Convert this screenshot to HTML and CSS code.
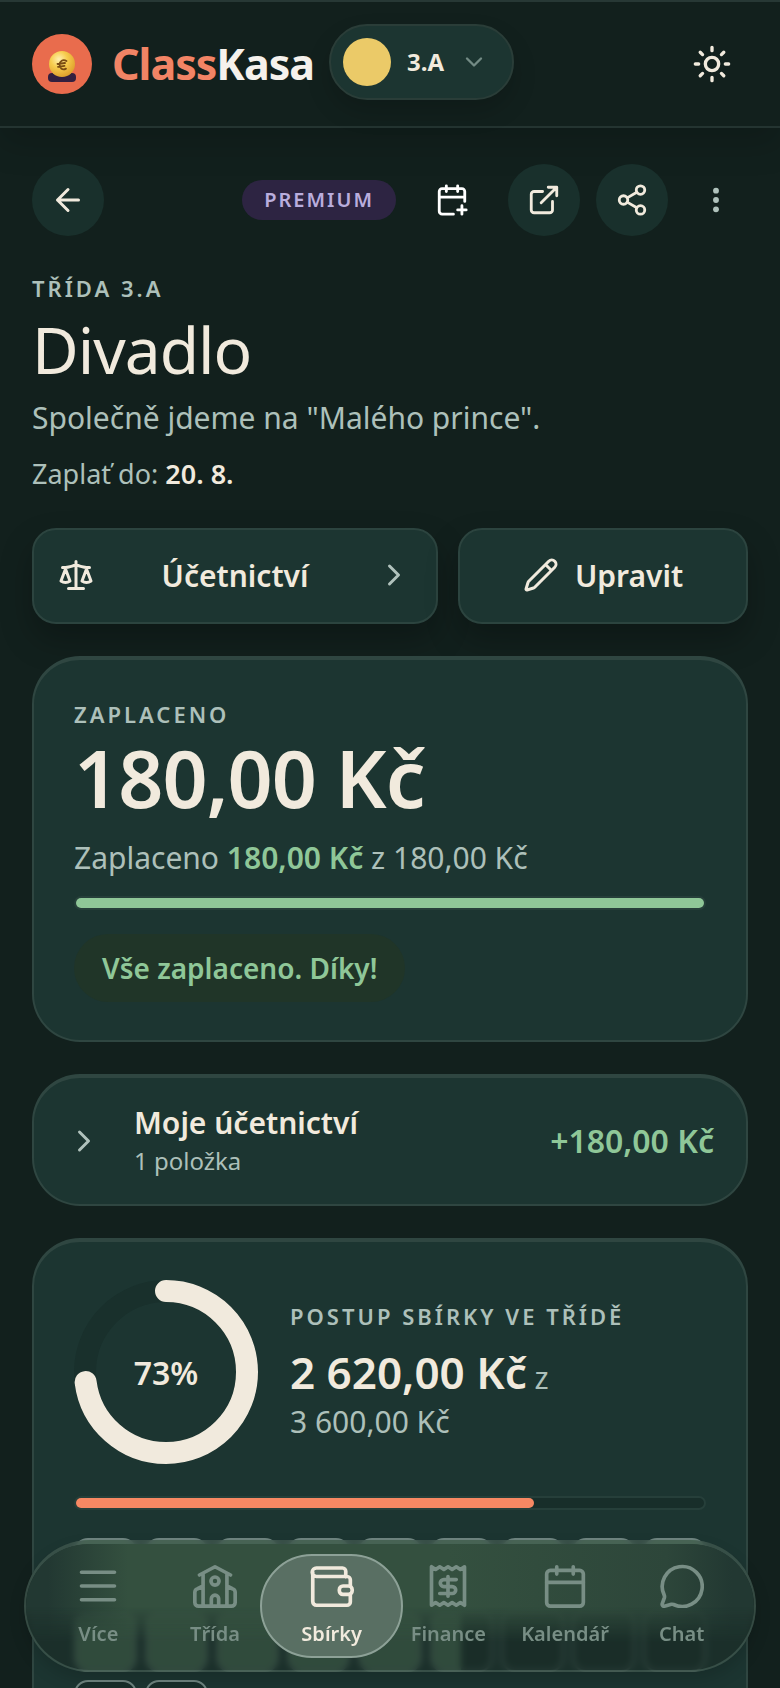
FILE: index.html
```html
<!DOCTYPE html>
<html lang="cs">
<head>
    <meta charset="UTF-8">
    <meta name="viewport" content="width=device-width, initial-scale=1.0">
    <title>Divadlo | ClassKasa</title>
    <link rel="stylesheet" href="styles.css">
</head>
<body>
    <header class="topbar">
        <a href="#" class="brand">
            <svg class="brand-logo" viewBox="0 0 60 60" aria-hidden="true">
                <defs>
                    <radialGradient id="coin" cx="38%" cy="32%" r="70%">
                        <stop offset="0" stop-color="#fff0b0"/>
                        <stop offset="0.45" stop-color="#f7cd4e"/>
                        <stop offset="1" stop-color="#dfa02c"/>
                    </radialGradient>
                </defs>
                <circle cx="30" cy="30" r="30" fill="#e96c4d"/>
                <rect x="16" y="39" width="28" height="9" rx="4" fill="#33203f"/>
                <circle cx="30" cy="30" r="13" fill="url(#coin)"/>
                <path d="M34.500 27c-3.500-2-7 0-7 3.600s3 6 6.500 4M25.500 30l7.500-1M26 32.800l6.500-1" fill="none" stroke="#7a4c12" stroke-width="1.800"/>
            </svg>
            <span class="brand-name"><span class="brand-accent">Class</span>Kasa</span>
        </a>
        <button type="button" class="class-switch">
            <span class="class-dot"></span>
            <span class="class-label">3.A</span>
            <svg class="class-chevron" viewBox="0 0 24 24" aria-hidden="true"><path d="m6 9 6 6 6-6"/></svg>
        </button>
        <button type="button" class="theme-btn" aria-label="Motiv">
            <svg viewBox="0 0 24 24" aria-hidden="true"><circle cx="12" cy="12" r="4"/><path d="M12 2v2M12 20v2M4.930 4.930l1.410 1.410M17.660 17.660l1.410 1.410M2 12h2M20 12h2M6.340 17.660l-1.410 1.410M19.070 4.930l-1.410 1.410"/></svg>
        </button>
    </header>

    <main class="page">
        <div class="actions">
            <a href="#" class="round-btn back-btn" aria-label="Zpět">
                <svg viewBox="0 0 24 24" aria-hidden="true"><path d="m12 19-7-7 7-7M19 12H5"/></svg>
            </a>
            <span class="badge">PREMIUM</span>
            <button type="button" class="plain-btn" aria-label="Přidat do kalendáře">
                <svg viewBox="0 0 24 24" aria-hidden="true"><path d="M8 2v4M16 2v4M21 13V6a2 2 0 0 0-2-2H5a2 2 0 0 0-2 2v14a2 2 0 0 0 2 2h8M3 10h18M16 19h6M19 16v6"/></svg>
            </button>
            <button type="button" class="round-btn" aria-label="Otevřít">
                <svg viewBox="0 0 24 24" aria-hidden="true"><path d="M15 3h6v6M10 14 21 3M18 13v6a2 2 0 0 1-2 2H5a2 2 0 0 1-2-2V8a2 2 0 0 1 2-2h6"/></svg>
            </button>
            <button type="button" class="round-btn" aria-label="Sdílet">
                <svg viewBox="0 0 24 24" aria-hidden="true"><circle cx="18" cy="5" r="3"/><circle cx="6" cy="12" r="3"/><circle cx="18" cy="19" r="3"/><path d="m8.590 13.510 6.830 3.980M15.410 6.510l-6.820 3.980"/></svg>
            </button>
            <button type="button" class="more-btn" aria-label="Další možnosti">
                <svg viewBox="0 0 24 24" aria-hidden="true"><circle cx="12" cy="5" r="2.200"/><circle cx="12" cy="12" r="2.200"/><circle cx="12" cy="19" r="2.200"/></svg>
            </button>
        </div>

        <section class="intro">
            <p class="eyebrow">TŘÍDA 3.A</p>
            <h1>Divadlo</h1>
            <p class="lead">Společně jdeme na "Malého prince".</p>
            <p class="due">Zaplať do: <strong>20. 8.</strong></p>
        </section>

        <div class="cta-row">
            <button type="button" class="cta cta-wide">
                <svg class="cta-icon" viewBox="0 0 24 24" aria-hidden="true"><path d="m16 16 3-8 3 8c-.87.65-1.920 1-3 1s-2.130-.35-3-1ZM2 16l3-8 3 8c-.87.65-1.920 1-3 1s-2.130-.35-3-1ZM7 21h10M12 3v18M3 7h2c2 0 5-1 7-2 2 1 5 2 7 2h2"/></svg>
                <span>Účetnictví</span>
                <svg class="cta-arrow" viewBox="0 0 24 24" aria-hidden="true"><path d="m9 18 6-6-6-6"/></svg>
            </button>
            <button type="button" class="cta">
                <svg class="cta-icon" viewBox="0 0 24 24" aria-hidden="true"><path d="M21.170 6.810a1 1 0 0 0-3.990-3.990L3.840 16.170a2 2 0 0 0-.5.830l-1.320 4.350a.5.5 0 0 0 .62.620l4.350-1.320a2 2 0 0 0 .83-.5zM15 5l4 4"/></svg>
                <span>Upravit</span>
            </button>
        </div>

        <section class="card paid">
            <p class="eyebrow">ZAPLACENO</p>
            <p class="amount">180,00 Kč</p>
            <p class="paid-text">Zaplaceno <strong>180,00 Kč</strong> z 180,00 Kč</p>
            <div class="bar"><div class="bar-fill bar-green" style="width: 100%"></div></div>
            <p class="notice">Vše zaplaceno. Díky!</p>
        </section>

        <button type="button" class="card ledger">
            <svg class="cta-arrow" viewBox="0 0 24 24" aria-hidden="true"><path d="m9 18 6-6-6-6"/></svg>
            <span class="ledger-text">
                <span class="ledger-title">Moje účetnictví</span>
                <span class="ledger-sub">1 položka</span>
            </span>
            <span class="ledger-sum">+180,00 Kč</span>
        </button>

        <section class="card progress">
            <div class="progress-head">
                <div class="ring">
                    <svg viewBox="0 0 184 184" aria-hidden="true">
                        <circle class="ring-track" cx="92" cy="92" r="81"/>
                        <circle class="ring-value" cx="92" cy="92" r="81" pathLength="100" stroke-dasharray="73 100"/>
                    </svg>
                    <span class="ring-label">73%</span>
                </div>
                <div class="progress-text">
                    <p class="eyebrow">POSTUP SBÍRKY VE TŘÍDĚ</p>
                    <p class="progress-sum"><strong>2 620,00 Kč</strong><small> z</small></p>
                    <p class="progress-goal">3 600,00 Kč</p>
                </div>
            </div>
            <div class="bar"><div class="bar-fill bar-coral" style="width: 73%"></div></div>
            <div class="tiles">
                <i class="tile full"></i><i class="tile full"></i><i class="tile full"></i><i class="tile full"></i><i class="tile full"></i><i class="tile full"></i><i class="tile full"></i><i class="tile full"></i><i class="tile full"></i>
                <i class="tile full"></i><i class="tile full"></i><i class="tile full"></i><i class="tile full"></i><i class="tile full"></i><i class="tile half"></i><i class="tile"></i><i class="tile"></i><i class="tile"></i>
                <i class="tile"></i><i class="tile"></i>
            </div>
        </section>
    </main>

    <nav class="tabbar">
        <a href="#" class="tab">
            <svg viewBox="0 0 24 24" aria-hidden="true"><path d="M3 4.500h18M3 12h18M3 19.500h18"/></svg>
            <span>Více</span>
        </a>
        <a href="#" class="tab">
            <svg viewBox="0 0 24 24" aria-hidden="true"><path d="M3.500 6 12 1.500 20.500 6M5.500 5.500V23M18.500 5.500V23M5.500 12l-3 1.500A2 2 0 0 0 1 15.300V21a2 2 0 0 0 2 2h18a2 2 0 0 0 2-2v-5.700a2 2 0 0 0-1.500-1.800l-3-1.500M10 23v-4a2 2 0 0 1 4 0v4"/><circle cx="12" cy="9.300" r="2.200"/></svg>
            <span>Třída</span>
        </a>
        <a href="#" class="tab active">
            <svg viewBox="0 0 24 24" aria-hidden="true"><path d="M19.500 7V4A1.800 1.800 0 0 0 17.700 2.200H3.500A2.300 2.300 0 0 0 3.500 6.800h16.700A1.800 1.800 0 0 1 22 8.600V12M1.500 4.500V20.500a2 2 0 0 0 2 2h16.700a1.800 1.800 0 0 0 1.800-1.800V17"/><rect x="16" y="12" width="7" height="4.600" rx="2"/></svg>
            <span>Sbírky</span>
        </a>
        <a href="#" class="tab">
            <svg viewBox="0 0 24 24" aria-hidden="true"><path d="M3 1.500v21l2.250-1.500 2.250 1.500 2.250-1.500L12 22.500l2.250-1.500 2.250 1.500 2.250-1.500L21 22.500v-21L18.750 3 16.500 1.500 14.250 3 12 1.500 9.750 3 7.500 1.500 5.250 3ZM16.500 8.500H9.700a1.900 1.900 0 0 0 0 3.800h4.600a1.900 1.900 0 0 1 0 3.800H7.500M12 6.800v10.800"/></svg>
            <span>Finance</span>
        </a>
        <a href="#" class="tab">
            <svg viewBox="0 0 24 24" aria-hidden="true"><rect x="2" y="3.500" width="20" height="19.500" rx="2"/><path d="M7.500 1.500v4M16.500 1.500v4M2 10h20"/></svg>
            <span>Kalendář</span>
        </a>
        <a href="#" class="tab">
            <svg viewBox="0 0 24 24" aria-hidden="true"><path d="M2.300 17a2 2 0 0 1 .1 1.300L1.200 21.800a1 1 0 0 0 1.200 1.200l3.800-1a2 2 0 0 1 1.200.1A10.900 10.900 0 1 0 2.300 17Z"/></svg>
            <span>Chat</span>
        </a>
    </nav>
</body>
</html>
```
FILE: styles.css
```css
* {
    box-sizing: border-box;
}
html {
    background: #12201d;
    scrollbar-width: none;
}
body {
    margin: 0;
    font-family: "Noto Sans", sans-serif;
    color: #f1eadd;
    background: #12201d;
}
h1, p {
    margin: 0;
}
a {
    color: inherit;
    text-decoration: none;
}
button {
    font: inherit;
    color: inherit;
    border: 0;
    padding: 0;
    background: none;
}
svg {
    display: block;
    flex: none;
    fill: none;
    stroke: currentColor;
    stroke-width: 2;
    stroke-linecap: round;
    stroke-linejoin: round;
}

/* top bar */
.topbar {
    display: flex;
    align-items: center;
    height: 128px;
    padding: 0 32px;
    border-top: 2px solid #273835;
    border-bottom: 2px solid #243431;
    box-shadow: 0 16px 32px rgba(0, 0, 0, 0.16);
}
.brand {
    display: flex;
    align-items: center;
    gap: 20px;
}
.brand-logo {
    width: 60px;
    height: 60px;
    stroke: none;
}
.brand-name {
    font-size: 43px;
    font-weight: 700;
    line-height: 60px;
    letter-spacing: -1px;
    color: #f5f1ec;
}
.brand-accent {
    color: #f28465;
}
.class-switch {
    display: flex;
    align-items: center;
    gap: 16px;
    height: 76px;
    margin-left: 15px;
    margin-bottom: 4px;
    padding: 0 24px 0 12px;
    border: 2px solid #2a3d38;
    border-radius: 38px;
    background: #1c3531;
    box-shadow: 0 12px 24px rgba(0, 0, 0, 0.16);
}
.class-dot {
    width: 48px;
    height: 48px;
    border-radius: 50%;
    background: #ebca68;
}
.class-label {
    font-size: 24px;
    font-weight: 700;
    line-height: 32px;
}
.class-chevron {
    width: 28px;
    height: 28px;
    color: #738b85;
}
.theme-btn {
    margin-left: auto;
    padding: 16px;
}
.theme-btn svg {
    width: 40px;
    height: 40px;
}

/* page */
.page {
    display: flex;
    flex-direction: column;
    padding: 36px 32px 160px;
}
.actions {
    display: flex;
    align-items: center;
}
.round-btn {
    display: grid;
    place-items: center;
    width: 72px;
    height: 72px;
    border-radius: 50%;
    background: #19302c;
}
.round-btn + .round-btn {
    margin-left: 16px;
}
.round-btn svg {
    width: 34px;
    height: 34px;
}
.back-btn svg {
    width: 36px;
    height: 36px;
}
.badge {
    margin-left: auto;
    padding: 0 22px;
    border-radius: 20px;
    font-size: 20px;
    font-weight: 600;
    line-height: 40px;
    letter-spacing: 2px;
    color: #b9addd;
    background: #2d2442;
}
.plain-btn {
    display: grid;
    place-items: center;
    width: 72px;
    height: 72px;
    margin: 0 20px;
    color: #fff;
}
.plain-btn svg {
    width: 34px;
    height: 34px;
}
.more-btn {
    margin-left: 16px;
    padding: 16px;
    color: #b0c2bc;
}
.more-btn svg {
    width: 32px;
    height: 32px;
    fill: currentColor;
    stroke: none;
}
.eyebrow {
    font-size: 22px;
    font-weight: 600;
    line-height: 32px;
    letter-spacing: 3px;
    color: #adc0ba;
}
.intro {
    margin-top: 36px;
}
.intro h1 {
    margin-top: 8px;
    font-size: 64px;
    font-weight: 400;
    line-height: 76px;
    letter-spacing: -1px;
}
.lead {
    margin-top: 8px;
    font-size: 30px;
    line-height: 44px;
    color: #adc0ba;
}
.due {
    margin-top: 14px;
    font-size: 27px;
    line-height: 40px;
    color: #adc0ba;
}
.due strong {
    font-weight: 600;
    color: #f1eadd;
}
.cta-row {
    display: grid;
    grid-template-columns: 7fr 5fr;
    gap: 20px;
    margin-top: 34px;
}
.cta {
    display: flex;
    align-items: center;
    justify-content: center;
    gap: 16px;
    height: 96px;
    padding: 0 24px 2px;
    border: 2px solid #2c443f;
    border-radius: 24px;
    font-size: 30px;
    font-weight: 600;
    background: #1c3531;
    box-shadow: 0 16px 32px rgba(0, 0, 0, 0.25);
}
.cta-wide {
    justify-content: space-between;
}
.cta-icon {
    width: 36px;
    height: 36px;
}
.cta-arrow {
    width: 36px;
    height: 36px;
    color: #b0c2bc;
}

/* cards */
.card {
    margin-top: 32px;
    border: 2px solid #2f4641;
    border-top-width: 4px;
    border-radius: 48px;
    background: #1c3531;
}
.paid {
    padding: 38px 40px;
}
.amount {
    font-size: 79px;
    font-weight: 600;
    line-height: 96px;
    letter-spacing: -1px;
}
.paid-text {
    margin-top: 10px;
    font-size: 30px;
    line-height: 44px;
    color: #adc0ba;
}
.paid-text strong {
    font-weight: 600;
    color: #8fc798;
}
.bar {
    height: 14px;
    margin-top: 16px;
    border: 2px solid #263f3a;
    border-radius: 7px;
    background: #182e2a;
}
.bar-fill {
    height: 10px;
    border-radius: 5px;
}
.bar-green {
    background: #8fc798;
}
.bar-coral {
    background: #f78863;
}
.notice {
    width: fit-content;
    margin-top: 24px;
    padding: 0 28px;
    border-radius: 34px;
    font-size: 28px;
    font-weight: 600;
    line-height: 68px;
    color: #8fc798;
    background: #203528;
}
.ledger {
    display: flex;
    align-items: center;
    height: 132px;
    padding: 0 32px;
    text-align: left;
}
.ledger-text {
    display: flex;
    flex-direction: column;
    flex: 1;
    margin-left: 32px;
}
.ledger-title {
    font-size: 30px;
    font-weight: 600;
    line-height: 40px;
}
.ledger-sub {
    font-size: 24px;
    line-height: 36px;
    color: #adc0ba;
}
.ledger-sum {
    font-size: 32px;
    font-weight: 600;
    line-height: 40px;
    color: #8fc798;
}
.progress {
    padding: 38px 40px;
}
.progress-head {
    display: flex;
    align-items: center;
    gap: 32px;
}
.ring {
    position: relative;
    width: 184px;
    height: 184px;
}
.ring svg {
    transform: rotate(-90deg);
    stroke-width: 22;
}
.ring-track {
    stroke: #19302c;
}
.ring-value {
    stroke: #f1eadd;
}
.ring-label {
    position: absolute;
    inset: 0;
    display: grid;
    place-items: center;
    font-size: 32px;
    font-weight: 600;
}
.progress-sum {
    margin-top: 14px;
    font-size: 44px;
    line-height: 52px;
}
.progress-sum strong {
    font-weight: 600;
}
.progress-sum small {
    font-size: 30px;
    line-height: 30px;
    color: #adc0ba;
}
.progress-goal {
    margin-top: 2px;
    font-size: 30px;
    line-height: 44px;
    color: #adc0ba;
}
.progress .bar {
    margin-top: 32px;
}
.tiles {
    display: grid;
    grid-template-columns: repeat(9, 1fr);
    gap: 8px;
    margin-top: 28px;
}
.tile {
    aspect-ratio: 1;
    border: 2px solid #6f8580;
    border-radius: 14px;
    background: #182e2a;
}
.tile.full {
    background: #628f6c;
}
.tile.half {
    background: linear-gradient(90deg, #628f6c 50%, #182e2a 50%);
}

/* bottom navigation */
.tabbar {
    position: fixed;
    left: 24px;
    right: 24px;
    bottom: 16px;
    display: grid;
    grid-template-columns: repeat(6, 1fr);
    align-items: center;
    height: 132px;
    padding: 0 14px 2px;
    border: 2px solid rgba(140, 170, 155, 0.25);
    border-top-width: 4px;
    border-radius: 66px;
    background: rgba(27, 46, 40, 0.7);
    backdrop-filter: blur(3px);
    box-shadow: 0 8px 16px rgba(0, 0, 0, 0.15);
}
/* tint over the upper part of the glass */
.tabbar::before {
    content: "";
    position: absolute;
    inset: 0;
    z-index: -1;
    border-radius: 62px;
    background: linear-gradient(90deg, #223832 3%, #34503f 14%, #34503f 58%, #2d463a 88%, #223832 97%);
    -webkit-mask-image: linear-gradient(#000 50%, transparent 78%);
    mask-image: linear-gradient(#000 50%, transparent 78%);
}
.tab {
    display: flex;
    flex-direction: column;
    align-items: center;
    gap: 12px;
    padding: 8px 0;
    font-size: 20px;
    font-weight: 600;
    line-height: 28px;
    color: #788e85;
}
.tab svg {
    width: 44px;
    height: 44px;
}
.tab.active {
    margin: 0 -13px;
    border: 2px solid #8da197;
    border-radius: 52px;
    color: #f1eadd;
    background: #596f63;
}
```
